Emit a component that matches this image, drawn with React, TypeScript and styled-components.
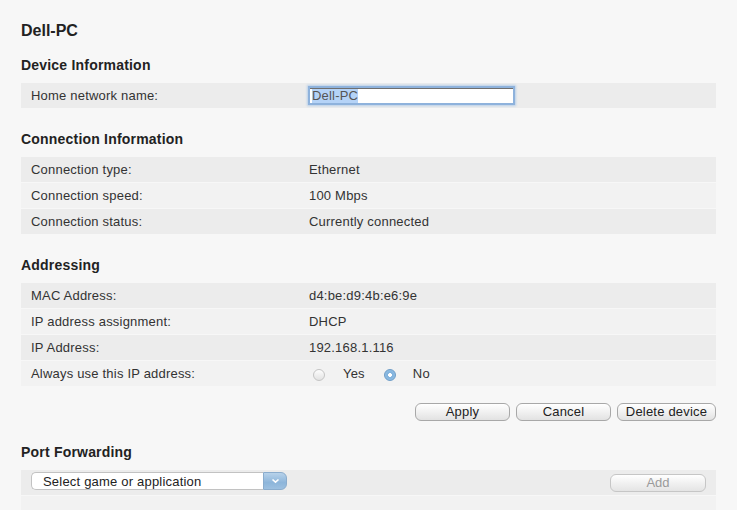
import React from 'react';
import styled, { createGlobalStyle } from 'styled-components';

const GlobalStyle = createGlobalStyle`
  html, body {
    margin: 0;
    padding: 0;
    background: #f7f7f7;
  }
  body {
    font-family: "Liberation Sans", Arial, sans-serif;
    color: #2b2b2b;
  }
`;

const connection = [
  ['Connection type:', 'Ethernet'],
  ['Connection speed:', '100 Mbps'],
  ['Connection status:', 'Currently connected'],
];

const addressing = [
  ['MAC Address:', 'd4:be:d9:4b:e6:9e'],
  ['IP address assignment:', 'DHCP'],
  ['IP Address:', '192.168.1.116'],
];

const App = () => {
  return (
    <Page>
      <GlobalStyle />
      <Title>Dell-PC</Title>

      <Heading>Device Information</Heading>
      <Table>
        <Row $shade="dark">
          <Label>Home network name:</Label>
          <FakeInput>
            <Selected>Dell-PC</Selected>
          </FakeInput>
        </Row>
      </Table>

      <Heading>Connection Information</Heading>
      <Table>
        {connection.map(([k, v], i) => (
          <Row key={k} $shade={i % 2 ? 'light' : 'dark'}>
            <Label>{k}</Label>
            <Value>{v}</Value>
          </Row>
        ))}
      </Table>

      <Heading>Addressing</Heading>
      <Table>
        {addressing.map(([k, v], i) => (
          <Row key={k} $shade={i % 2 ? 'light' : 'dark'}>
            <Label>{k}</Label>
            <Value>{v}</Value>
          </Row>
        ))}
        <Row $shade="light">
          <Label>Always use this IP address:</Label>
          <Radios>
            <Radio />
            <RadioText>Yes</RadioText>
            <Radio $checked />
            <RadioText>No</RadioText>
          </Radios>
        </Row>
      </Table>

      <Actions>
        <Button>Apply</Button>
        <Button>Cancel</Button>
        <Button $wide>Delete device</Button>
      </Actions>

      <Heading>Port Forwarding</Heading>
      <Table>
        <PortRow>
          <Select>
            <SelectText>Select game or application</SelectText>
            <SelectArrow>
              <svg width="9" height="6" viewBox="0 0 9 6">
                <path d="M1.5 1.5 L4.5 4.2 L7.5 1.5" fill="none" stroke="#fff" strokeWidth="1.6" />
              </svg>
            </SelectArrow>
          </Select>
          <AddButton disabled>Add</AddButton>
        </PortRow>
        <Row $shade="light" />
      </Table>
    </Page>
  );
};

export default App;

const Page = styled.div`
  width: 695px;
  padding: 21px 21px 0 21px;
  height: 489px;
  overflow: hidden;
`;

const Title = styled.h1`
  margin: 0 0 16px 0;
  font-size: 16px;
  font-weight: bold;
  line-height: 20px;
  color: #222;
`;

const Heading = styled.h2`
  margin: 0 0 10px 0;
  font-size: 14px;
  font-weight: bold;
  letter-spacing: 0.2px;
  line-height: 16px;
  color: #222;
`;

const Table = styled.div`
  display: flex;
  flex-direction: column;
  gap: 1px;
  margin-bottom: 23px;
`;

const Row = styled.div<{ $shade?: 'dark' | 'light' }>`
  display: grid;
  grid-template-columns: 278px 1fr;
  align-items: center;
  height: 25px;
  padding-left: 10px;
  background: ${(p) => (p.$shade === 'dark' ? '#ececec' : '#f2f2f2')};
  font-size: 13px;
  letter-spacing: 0.2px;
`;

const Label = styled.span`
  color: #333;
`;

const Value = styled.span`
  color: #333;
`;

const FakeInput = styled.div`
  width: 201px;
  height: 14px;
  margin-left: 1px;
  background: #fff;
  border-top: 1px solid #6f6f6f;
  box-shadow: 0 0 0 2px #8eb2dc, 0 0 2px 3px #b8cfe9;
  font-size: 13px;
  line-height: 14px;
  padding-left: 2px;
  display: flex;
  align-items: center;
`;

const Selected = styled.span`
  background: #b5d3f7;
  color: #555;
`;

const Radios = styled.div`
  display: flex;
  align-items: center;
  padding-left: 4px;
`;

const Radio = styled.span<{ $checked?: boolean }>`
  width: 12px;
  height: 12px;
  border-radius: 50%;
  box-sizing: border-box;
  margin-right: ${(p) => (p.$checked ? '17px' : '18px')};
  border: 1px solid ${(p) => (p.$checked ? '#6c9cc7' : '#c4c4c4')};
  background: ${(p) =>
    p.$checked
      ? 'radial-gradient(circle, #fff 0 1.6px, #7fb1dc 2.2px, #9cc6e9 100%)'
      : 'linear-gradient(#fdfdfd, #e2e2e2)'};
  position: relative;
  top: 1px;
`;

const RadioText = styled.span`
  margin-right: 19px;
  color: #333;
`;

const Actions = styled.div`
  display: flex;
  justify-content: flex-end;
  gap: 6px;
  margin-top: -6px;
  margin-bottom: 23px;
`;

const Button = styled.button<{ $wide?: boolean }>`
  width: ${(p) => (p.$wide ? '99px' : '95px')};
  height: 18px;
  padding: 0;
  border: 1px solid #a8a8a8;
  border-radius: 6px;
  background: linear-gradient(#ffffff, #f1f1f1 50%, #e2e2e2);
  font-family: "Liberation Sans", Arial, sans-serif;
  font-size: 13px;
  letter-spacing: 0.2px;
  line-height: 16px;
  color: #222;
`;

const PortRow = styled.div`
  display: flex;
  align-items: flex-start;
  justify-content: space-between;
  height: 25px;
  box-sizing: border-box;
  padding: 2px 10px 0 10px;
  background: #ececec;
`;

const Select = styled.div`
  display: flex;
  width: 256px;
  height: 18px;
`;

const SelectText = styled.div`
  flex: 1;
  background: #fff;
  border: 1px solid #c2c2c2;
  border-right: none;
  border-radius: 5px 0 0 5px;
  font-size: 13px;
  letter-spacing: 0.2px;
  line-height: 17px;
  padding-left: 11px;
  color: #222;
`;

const SelectArrow = styled.div`
  width: 24px;
  border-radius: 0 6px 6px 0;
  background: linear-gradient(#b7d2ea, #8db5da 60%, #9dc0e0);
  border: 1px solid #8aaccd;
  box-sizing: border-box;
  display: flex;
  align-items: center;
  justify-content: center;
`;

const AddButton = styled.button`
  width: 96px;
  height: 18px;
  margin-top: 2px;
  padding: 0;
  border: 1px solid #c6c6c6;
  border-radius: 6px;
  background: linear-gradient(#ffffff, #f1f1f1 50%, #e4e4e4);
  font-family: "Liberation Sans", Arial, sans-serif;
  font-size: 13px;
  line-height: 16px;
  color: #9a9a9a;
`;
